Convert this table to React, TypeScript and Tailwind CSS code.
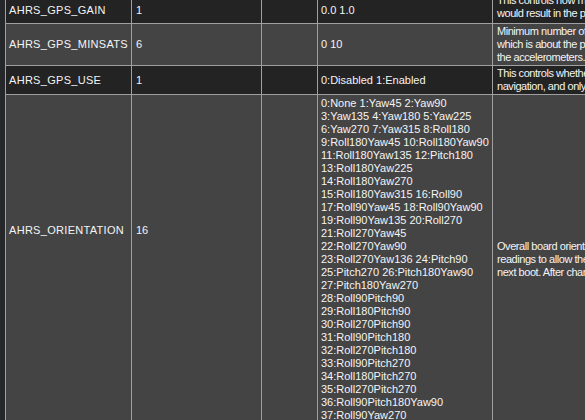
import React from "react";

const rows = [
  {
    name: "AHRS_GPS_GAIN",
    value: "1",
    options: ["0.0 1.0"],
    desc: [
      "This controls how much to use the GPS to correct the attitude. This should never be set to zero for a plane as it",
      "would result in the plane losing control in turns. For a plane please use the default value of 1.0.",
    ],
    h: "h-[26px]",
    bg: "bg-[#232323]",
    descPos: "justify-end pb-[3px]",
    namePos: "items-center",
  },
  {
    name: "AHRS_GPS_MINSATS",
    value: "6",
    options: ["0 10"],
    desc: [
      "Minimum number of satellites visible to use GPS for velocity based corrections attitude correction. This defaults to 6,",
      "which is about the point at which the velocity numbers from a GPS become too unreliable for accurate correction of",
      "the accelerometers.",
    ],
    h: "h-[41px]",
    bg: "bg-[#444445]",
    descPos: "justify-center",
    namePos: "items-center",
  },
  {
    name: "AHRS_GPS_USE",
    value: "1",
    options: ["0:Disabled 1:Enabled"],
    desc: [
      "This controls whether to use dead-reckoning or GPS based navigation. If set to 0 then the GPS won't be used for",
      "navigation, and only dead reckoning will be used. A value of zero should never be used for normal flight.",
    ],
    h: "h-[28px]",
    bg: "bg-[#232323]",
    descPos: "justify-center",
    namePos: "items-center",
  },
  {
    name: "AHRS_ORIENTATION",
    value: "16",
    options: [
      "0:None 1:Yaw45 2:Yaw90",
      "3:Yaw135 4:Yaw180 5:Yaw225",
      "6:Yaw270 7:Yaw315 8:Roll180",
      "9:Roll180Yaw45 10:Roll180Yaw90",
      "11:Roll180Yaw135 12:Pitch180",
      "13:Roll180Yaw225",
      "14:Roll180Yaw270",
      "15:Roll180Yaw315 16:Roll90",
      "17:Roll90Yaw45 18:Roll90Yaw90",
      "19:Roll90Yaw135 20:Roll270",
      "21:Roll270Yaw45",
      "22:Roll270Yaw90",
      "23:Roll270Yaw136 24:Pitch90",
      "25:Pitch270 26:Pitch180Yaw90",
      "27:Pitch180Yaw270",
      "28:Roll90Pitch90",
      "29:Roll180Pitch90",
      "30:Roll270Pitch90",
      "31:Roll90Pitch180",
      "32:Roll270Pitch180",
      "33:Roll90Pitch270",
      "34:Roll180Pitch270",
      "35:Roll270Pitch270",
      "36:Roll90Pitch180Yaw90",
      "37:Roll90Yaw270",
    ],
    desc: [
      "Overall board orientation relative to the standard orientation for the board type. This rotates the IMU and compass",
      "readings to allow the board to be oriented in your vehicle at any 90 or 45 degree angle. This option takes affect on",
      "next boot. After changing you will need to re-level your vehicle.",
    ],
    h: "h-[329px]",
    bg: "bg-[#444445]",
    descPos: "justify-center",
    namePos: "items-start pt-[129px]",
  },
];

export default function App() {
  return (
    <div
      className="w-[585px] h-[420px] overflow-hidden bg-[#232323] flex text-[#f4f4f4] text-[11px] leading-[13px]"
      style={{ fontFamily: '"Liberation Sans", Arial, sans-serif' }}
    >
      <div className="w-[5px] shrink-0 bg-[#26272b]" />
      <div className="flex-1 min-w-0 -mt-[3px] bg-[#a0a0a0] pl-px">
        <div className="grid grid-cols-[125px_129px_55px_174px_400px] gap-px">
          {rows.map((r) => (
            <React.Fragment key={r.name}>
              <div className={`${r.h} ${r.bg} flex ${r.namePos} pl-[3px] whitespace-nowrap tracking-[0.3px]`}>{r.name}</div>
              <div className={`${r.h} ${r.bg} flex ${r.namePos} pl-[4px] whitespace-nowrap`}>{r.value}</div>
              <div className={`${r.h} ${r.bg}`} />
              <div className={`${r.h} ${r.bg} flex flex-col justify-center pl-[3px] whitespace-nowrap`}>
                {r.options.map((o) => (
                  <div key={o}>{o}</div>
                ))}
              </div>
              <div
                className={`${r.h} ${r.bg} flex flex-col ${r.descPos} pl-[4px] whitespace-nowrap overflow-hidden tracking-[-0.45px]`}
              >
                {r.desc.map((d) => (
                  <div key={d}>{d}</div>
                ))}
              </div>
            </React.Fragment>
          ))}
        </div>
      </div>
    </div>
  );
}
